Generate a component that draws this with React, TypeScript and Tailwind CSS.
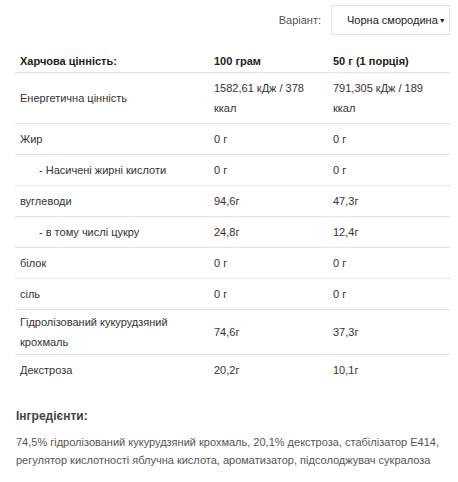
import React from "react";

type Row = { name: string; a: string; b: string; indent?: boolean };

const rows: Row[] = [
  { name: "Енергетична цінність", a: "1582,61 кДж / 378 ккал", b: "791,305 кДж / 189 ккал" },
  { name: "Жир", a: "0 г", b: "0 г" },
  { name: "- Насичені жирні кислоти", a: "0 г", b: "0 г", indent: true },
  { name: "вуглеводи", a: "94,6г", b: "47,3г" },
  { name: "- в тому числі цукру", a: "24,8г", b: "12,4г", indent: true },
  { name: "білок", a: "0 г", b: "0 г" },
  { name: "сіль", a: "0 г", b: "0 г" },
  { name: "Гідролізований кукурудзяний крохмаль", a: "74,6г", b: "37,3г" },
  { name: "Декстроза", a: "20,2г", b: "10,1г" },
];

export default function App() {
  return (
    <div
      className="w-[458px] h-[482px] bg-white text-[#333] text-[11px]"
      style={{ fontFamily: '"Liberation Sans", Arial, sans-serif' }}
    >
      <div className="flex justify-end items-center pt-[5px] pr-[8px] gap-[10px]">
        <span className="text-[#555]">Варіант:</span>
        <div className="w-[119px] h-[30px] border border-[#e5e5e5] flex items-center pl-[15px] whitespace-nowrap text-[#222]">
          <span>Чорна смородина</span>
          <span className="text-[7px] ml-[1px] mt-[2px]">▼</span>
        </div>
      </div>
      <div className="mx-[15px] mt-[11px] w-[435px]">
        <div className="grid grid-cols-[194px_119px_122px] border-b border-[#dfe4ea] font-bold text-[#222]">
          <div className="px-[5px] pt-[5px] pb-[1px] leading-[20px]">Харчова цінність:</div>
          <div className="px-[5px] pt-[5px] pb-[1px] leading-[20px]">100 грам</div>
          <div className="px-[5px] pt-[5px] pb-[1px] leading-[20px]">50 г (1 порція)</div>
        </div>
        {rows.map((r, i) => (
          <div
            key={i}
            className={`grid grid-cols-[194px_119px_122px] items-center ${i < rows.length - 1 ? "border-b border-[#dfe4ea]" : ""}`}
          >
            <div className={`py-[2px] leading-[20px] pr-[40px] ${r.indent ? "pl-[24px]" : "pl-[5px]"}`}>
              {r.name}
            </div>
            <div className="px-[5px] py-[5px] leading-[20px]">{r.a}</div>
            <div className="px-[5px] py-[5px] leading-[20px]">{r.b}</div>
          </div>
        ))}
      </div>
      <div className="px-[16px] mt-[22px]">
        <div className="font-bold text-[12px] text-[#444] leading-[18px]">Інгредієнти:</div>
        <div className="mt-[8px] leading-[18px] text-[#555]">
          74,5% гідролізований кукурудзяний крохмаль, 20,1% декстроза, стабілізатор Е414, регулятор кислотності яблучна кислота, ароматизатор, підсолоджувач сукралоза
        </div>
      </div>
    </div>
  );
}
